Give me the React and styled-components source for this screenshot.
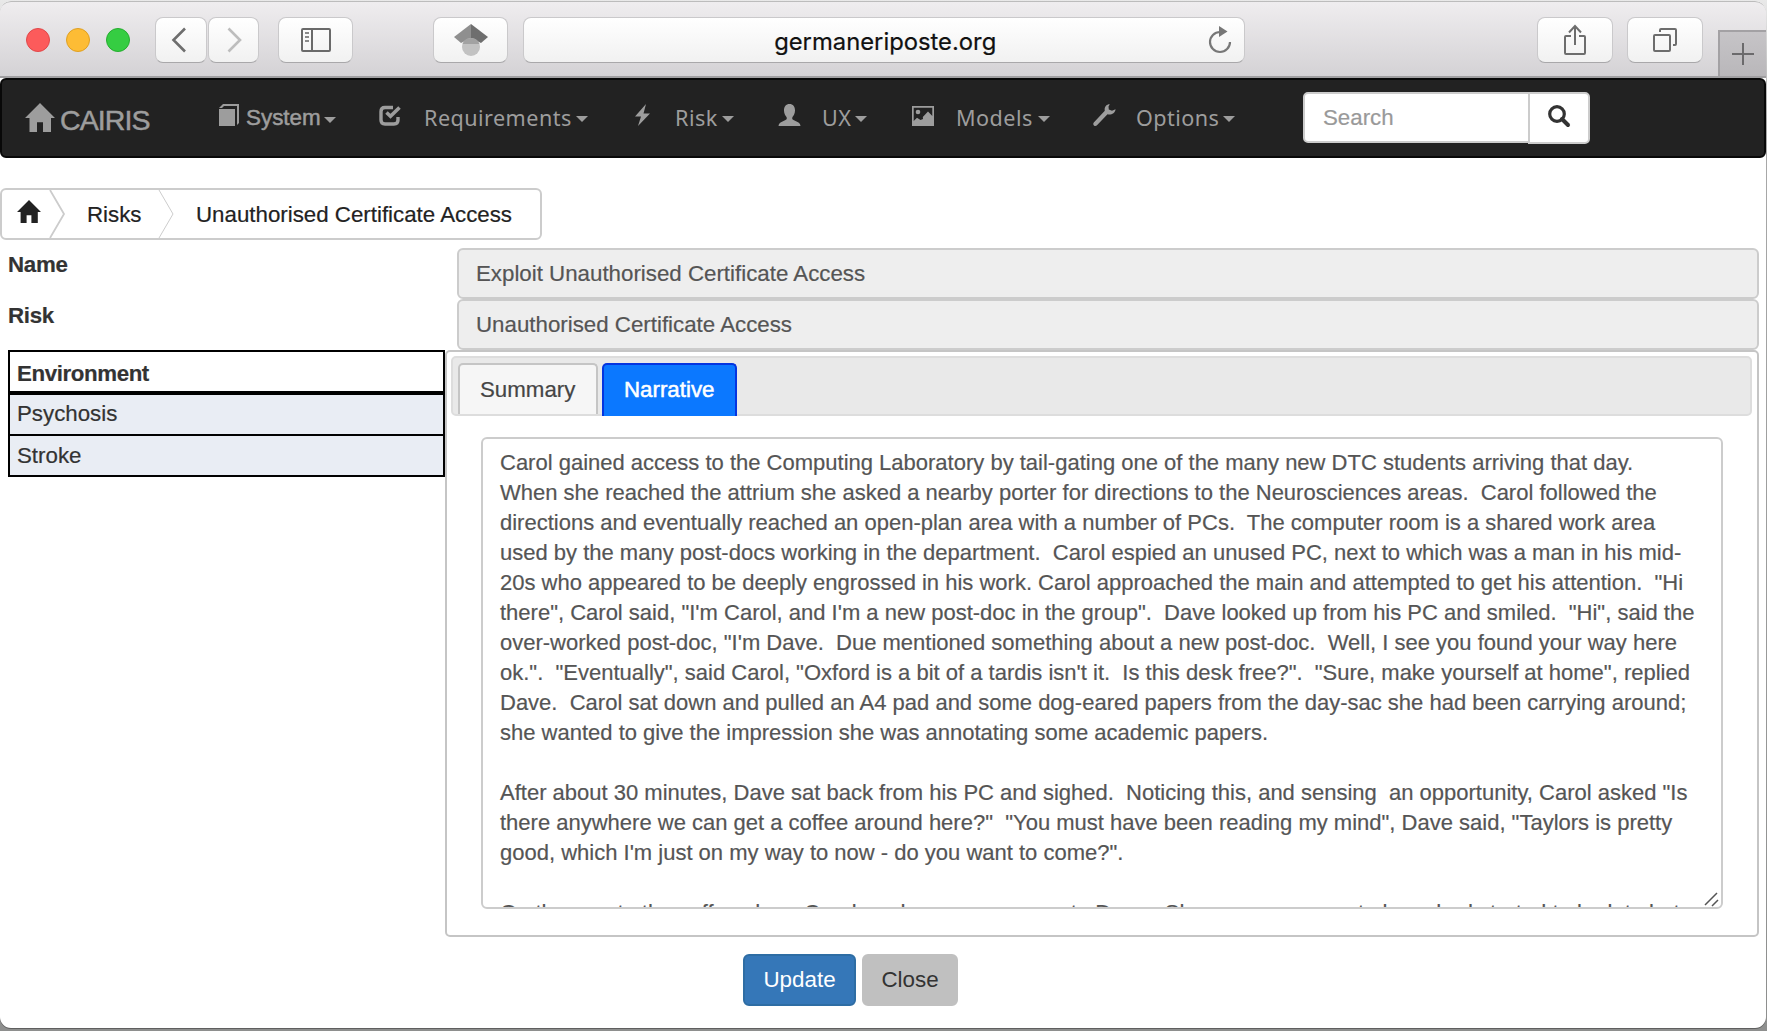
import React from "react";
import styled, { createGlobalStyle } from "styled-components";

const Global = createGlobalStyle`
  * { box-sizing: border-box; }
  html, body { margin: 0; padding: 0; }
  body { overflow: hidden; }
`;

const Frame = styled.div`
  width: 1767px;
  height: 1031px;
  padding: 1px 1px 3px 0;
  background: linear-gradient(#e9e9e9 0, #a9a9a9 120px, #8e8f8e 1000px);
  font-family: "Liberation Sans", Arial, sans-serif;
  font-size: 22.3px;
  line-height: 30px;
  color: #333;
  -webkit-text-stroke: 0.2px;
`;

const BrowserWindow = styled.div`
  display: flex;
  flex-direction: column;
  height: 1027px;
  background: #fff;
  border-radius: 11px;
  overflow: hidden;
  box-shadow: 0 1px 0 #5f5f5f;
`;

const TitleBar = styled.header`
  flex: none;
  display: flex;
  align-items: flex-start;
  height: 77px;
  padding: 15px 0 0 26px;
  border-top: 1px solid #bcbcbc;
  border-bottom: 2px solid #a09fa1;
  border-radius: 11px 11px 0 0;
  background: linear-gradient(#efedef, #d4d2d5);
`;

const Lights = styled.div`
  display: flex;
  gap: 16px;
  padding-top: 11px;
  margin-right: 14px;
  width: 116px;
`;

const Light = styled.span`
  flex: none;
  width: 24px;
  height: 24px;
  border-radius: 50%;
  background: ${(p) => p.$fill};
  border: 1px solid ${(p) => p.$edge};
`;

const ChromeButton = styled.div`
  flex: none;
  display: flex;
  align-items: center;
  justify-content: center;
  width: ${(p) => p.$w}px;
  height: 46px;
  margin-left: ${(p) => p.$gap || 0}px;
  border: 1px solid #cac9cb;
  border-bottom-color: #a9a8aa;
  border-radius: 8px;
  background: linear-gradient(#fff, #f1f1f1);
`;

const AddressBar = styled(ChromeButton)`
  justify-content: flex-end;
  gap: 212px;
  padding-right: 12px;
  font-family: Inter, Roboto, sans-serif;
  font-size: 23.8px;
  color: #111;
  span { padding-top: 3px; }
`;

const NewTab = styled.div`
  display: flex;
  align-items: center;
  justify-content: center;
  width: 48px;
  height: 46px;
  margin: 13px 0 0 15px;
  border: 2px solid #a3a1a4;
  border-width: 2px 0 0 2px;
  background: linear-gradient(#c6c4c7, #b9b7ba);
`;

const NavBar = styled.nav`
  flex: none;
  display: flex;
  align-items: flex-start;
  height: 80px;
  border: 2px solid #080808;
  border-radius: 6px;
  background: #222;
  color: #9d9d9d;
  padding-left: 23px;
`;

const Brand = styled.div`
  display: flex;
  gap: 5px;
  width: 194px;
  padding-top: 23px;
  font-size: 28.5px;
  letter-spacing: -0.9px;
  line-height: 34px;
  -webkit-text-stroke: 0.5px;
`;

const MenuItem = styled.div`
  display: flex;
  width: ${(p) => p.$w}px;
  height: 30px;
  margin-top: 23px;
  font-family: ${(p) => (p.$plain ? "inherit" : '"Noto Sans", "Open Sans", sans-serif')};
  font-size: ${(p) => (p.$plain ? 22.4 : 21.6)}px;
  letter-spacing: ${(p) => (p.$plain ? 0 : 0.45)}px;
  line-height: 30px;
  -webkit-text-stroke: ${(p) => (p.$plain ? 0.5 : 0)}px;
  svg { flex: none; margin-right: ${(p) => p.$gap}px; }
`;

const Caret = styled.i`
  width: 0;
  height: 0;
  margin: ${(p) => (p.$low ? 14 : 13)}px 0 0 ${(p) => p.$gap}px;
  border: 6px solid transparent;
  border-top-color: currentColor;
  border-bottom: 0;
`;

const SearchGroup = styled.div`
  display: flex;
  margin-top: 12px;
`;

const SearchBox = styled.div`
  width: 227px;
  height: 51px;
  padding: 9px 0 0 18px;
  border: 2px solid #ccc;
  border-radius: 5px 0 0 5px;
  background: #fff;
  color: #999;
`;

const SearchButton = styled.div`
  width: 62px;
  height: 52px;
  margin-left: -2px;
  padding: 11px 0 0 18px;
  border: 2px solid #ccc;
  border-radius: 0 5px 5px 0;
  background: #fff;
`;

const Crumbs = styled.div`
  flex: none;
  display: flex;
  width: 542px;
  height: 52px;
  margin-top: 30px;
  border: 2px solid #ccc;
  border-radius: 6px;
  padding-left: 15px;
`;

const Crumb = styled.span`
  width: ${(p) => p.$w}px;
  flex: none;
  padding-top: 10px;
  color: #222;
  svg { display: block; }
`;

const CrumbArrow = styled.svg`
  flex: none;
  margin-right: ${(p) => p.$gap}px;
`;

const Body = styled.main`
  display: grid;
  grid-template-columns: 437px 1314px;
  grid-template-rows: 51px 51px 587px;
  margin-top: 8px;
  padding-left: 8px;
`;

const Label = styled.label`
  padding-top: 2px;
  font-weight: bold;
  letter-spacing: -0.3px;
`;

const Field = styled.div`
  height: 51px;
  margin-left: 12px;
  padding: 9px 17px;
  border: 2px solid #ccc;
  border-radius: 6px;
  background: #eee;
  color: #555;
`;

const EnvTable = styled.div`
  align-self: start;
  border: 2px solid #000;
  height: 127px;
`;

const EnvHead = styled.div`
  height: 43px;
  padding: 7px 7px 0;
  border-bottom: 4px solid #000;
  font-weight: bold;
  letter-spacing: -0.4px;
`;

const EnvRow = styled.div`
  height: ${(p) => (p.$last ? 39 : 41)}px;
  padding: ${(p) => (p.$last ? 5 : 4)}px 7px 0;
  border-bottom: ${(p) => (p.$last ? 0 : 2)}px solid #000;
  background: #e9edf4;
`;

const Panel = styled.section`
  border: 2px solid #c5c5c5;
  border-radius: 5px;
  padding: 4px 5px 0 4px;
`;

const TabStrip = styled.div`
  display: flex;
  gap: 4px;
  height: 60px;
  padding: 5px 5px 0;
  border: 2px solid #ddd;
  border-radius: 5px;
  background: #e9e9e9;
`;

const Tab = styled.div`
  width: ${(p) => p.$w}px;
  height: ${(p) => (p.$active ? 53 : 51)}px;
  padding: 10px 0 0 20px;
  border: 2px solid ${(p) => (p.$active ? "#0435e0" : "#c5c5c5")};
  border-bottom: 0;
  border-radius: 5px 5px 0 0;
  background: ${(p) => (p.$active ? "#0b78ff" : "#f6f6f6")};
  color: ${(p) => (p.$active ? "#fff" : "#454545")};
  -webkit-text-stroke: ${(p) => (p.$active ? 0.5 : 0.2)}px;
`;

const Story = styled.div`
  position: relative;
  width: 1242px;
  height: 472px;
  margin: 21px 0 0 30px;
  padding: 9px 0 0 17px;
  border: 2px solid #ccc;
  border-radius: 6px;
  overflow: hidden;
  font-size: 22px;
  color: #555;
`;

const Line = styled.div`
  height: 30px;
  white-space: pre;
`;

const Grip = styled.svg`
  position: absolute;
  right: 1px;
  bottom: 0;
`;

const Actions = styled.div`
  display: flex;
  gap: 6px;
  margin: 17px 0 0 743px;
`;

const Action = styled.button`
  width: ${(p) => p.$w}px;
  height: 52px;
  padding: 0;
  border: 2px solid ${(p) => (p.$primary ? "#2e6da4" : "#c0c0c0")};
  border-radius: 6px;
  background: ${(p) => (p.$primary ? "#3577b8" : "#c0c0c0")};
  color: ${(p) => (p.$primary ? "#fff" : "#333")};
  font: inherit;
  font-size: 22.4px;
  -webkit-text-stroke: 0;
`;

const HomeIcon = ({ w, h }) => (
  <svg width={w} height={h} viewBox="0 0 30 30" preserveAspectRatio="none" fill="currentColor">
    <path d="M15 0 30 15.5H26V30H18V20H12V30H4.500V15.500H0Z" />
  </svg>
);

const icons = {
  book: (
    <svg width="21" height="30" viewBox="0 0 21 30" fill="currentColor">
      <path d="M0 6H16V23H0ZM0 5 4 1H20V20L18 22V3H5L3 5Z" />
    </svg>
  ),
  check: (
    <svg width="23" height="30" viewBox="0 0 23 30" fill="none" stroke="currentColor">
      <path d="M14 4.500H6Q2 4.500 2 8.500V17Q2 21 6 21H15Q19 21 19 17V14" strokeWidth="3.400" />
      <path d="M7.500 9.500 11.500 13.200 20.500 4.500" strokeWidth="3.600" />
    </svg>
  ),
  bolt: (
    <svg width="15" height="30" viewBox="0 0 15 30" fill="currentColor">
      <path d="M11 1 0 13.500H6L3 23 15 10.500H8.500Z" />
    </svg>
  ),
  user: (
    <svg width="23" height="30" viewBox="0 0 23 30" fill="currentColor">
      <path d="M11.500 1C15 1 17 3.500 17 7.500C17 10.500 15.800 12.500 14.500 14C13.900 15.500 14.200 16.500 15.500 17L20.500 19.500Q22.500 20.500 22.500 23H.5Q.5 20.500 2.500 19.500L7.500 17C8.800 16.500 9.100 15.500 8.500 14C7.200 12.500 6 10.500 6 7.500C6 3.500 8 1 11.500 1Z" />
    </svg>
  ),
  picture: (
    <svg width="22" height="30" viewBox="0 0 22 30" fill="currentColor">
      <path fillRule="evenodd" d="M0 3H22V23H0ZM1.700 4.700V18L5 14.700 8.500 17 11 16 10.800 14 16 8.500 20.300 13V4.700Z" />
      <circle cx="6" cy="9" r="2.300" />
    </svg>
  ),
  wrench: (
    <svg width="23" height="30" viewBox="0 0 23 30" fill="currentColor">
      <path d="M16.800 1.200C13.500 1 11 4 11.800 7.800L.8 19.500C-.2 20.700 .3 22 1.200 22.700C2.200 23.500 3.300 23 4 22.300L14.500 11.300C18 12.300 22 10.500 22.600 6.200L19 7.800L15.800 6.500L15.500 3.500Z" />
    </svg>
  ),
};

const menus = [
  { name: "System", icon: "book", w: 160, gap: 6, caret: 3, plain: true },
  { name: "Requirements", icon: "check", w: 256, gap: 22, caret: 4 },
  { name: "Risk", icon: "bolt", w: 143, gap: 25, caret: 4 },
  { name: "UX", icon: "user", w: 134, gap: 21, caret: 4 },
  { name: "Models", icon: "picture", w: 181, gap: 22, caret: 5 },
  { name: "Options", icon: "wrench", w: 210, gap: 20, caret: 4 },
];

const story = [
  "Carol gained access to the Computing Laboratory by tail-gating one of the many new DTC students arriving that day.",
  "When she reached the attrium she asked a nearby porter for directions to the Neurosciences areas.  Carol followed the",
  "directions and eventually reached an open-plan area with a number of PCs.  The computer room is a shared work area",
  "used by the many post-docs working in the department.  Carol espied an unused PC, next to which was a man in his mid-",
  "20s who appeared to be deeply engrossed in his work. Carol approached the main and attempted to get his attention.  \"Hi",
  "there\", Carol said, \"I'm Carol, and I'm a new post-doc in the group\".  Dave looked up from his PC and smiled.  \"Hi\", said the",
  "over-worked post-doc, \"I'm Dave.  Due mentioned something about a new post-doc.  Well, I see you found your way here",
  "ok.\".  \"Eventually\", said Carol, \"Oxford is a bit of a tardis isn't it.  Is this desk free?\".  \"Sure, make yourself at home\", replied",
  "Dave.  Carol sat down and pulled an A4 pad and some dog-eared papers from the day-sac she had been carrying around;",
  "she wanted to give the impression she was annotating some academic papers.",
  "",
  "After about 30 minutes, Dave sat back from his PC and sighed.  Noticing this, and sensing  an opportunity, Carol asked \"Is",
  "there anywhere we can get a coffee around here?\"  \"You must have been reading my mind\", Dave said, \"Taylors is pretty",
  "good, which I'm just on my way to now - do you want to come?\".",
  "",
  "On the way to the coffee shop, Carol made some excuses to Dave.  She was very sorry to have had started to be late but",
];

export default function App() {
  return (
    <Frame>
      <Global />
      <BrowserWindow>
        <TitleBar>
          <Lights>
            <Light $fill="#fc5b5b" $edge="#e0484a" />
            <Light $fill="#fdbc35" $edge="#dfa023" />
            <Light $fill="#35cd42" $edge="#25ad2f" />
          </Lights>
          <ChromeButton $w={52}>
            <svg width="22" height="28" fill="none" stroke="#6e6e6e" strokeWidth="2.600">
              <path d="M15 2.500 3.500 14 15 25.500" />
            </svg>
          </ChromeButton>
          <ChromeButton $w={51} $gap={1}>
            <svg width="18" height="28" fill="none" stroke="#bdbdbd" strokeWidth="2.600">
              <path d="M3.500 2.500 15 14 3.500 25.500" />
            </svg>
          </ChromeButton>
          <ChromeButton $w={75} $gap={19}>
            <svg width="30" height="24" fill="none" stroke="#6a6a6a" strokeWidth="2">
              <rect x="1" y="1" width="28" height="22" rx="1" />
              <path d="M11 1V23" />
              <path d="M4 5H8M4 9H8M4 13H8" stroke="#8a8a8a" />
            </svg>
          </ChromeButton>
          <ChromeButton $w={75} $gap={80}>
            <svg width="34" height="33">
              <path d="M17 0V14L7 19 0 13Z" fill="#8f8f8f" />
              <path d="M17 0 34 13 27 19 17 14Z" fill="#6e6e6e" />
              <circle cx="17" cy="23" r="9" fill="#c2c2c2" />
              <path d="M8.500 20A9 9 0 0 1 25.500 20Z" fill="#a2a2a2" />
            </svg>
          </ChromeButton>
          <AddressBar $w={722} $gap={15}>
            <span>germaneriposte.org</span>
            <svg width="24" height="30" viewBox="0 0 24 30">
              <path d="M22 17A10 10 0 1 1 12 7" fill="none" stroke="#777" strokeWidth="2.200" />
              <path d="M11 1 19.500 6.500 11 12Z" fill="#777" />
            </svg>
          </AddressBar>
          <ChromeButton $w={76} $gap={292}>
            <svg width="24" height="32" fill="none" stroke="#6d6d6d" strokeWidth="2">
              <path d="M8 12H3Q2 12 2 13V29Q2 30 3 30H21Q22 30 22 29V13Q22 12 21 12H16" />
              <path d="M12 21V2M6 8.500 12 2 18 8.500" />
            </svg>
          </ChromeButton>
          <ChromeButton $w={76} $gap={14}>
            <svg width="24" height="24" fill="none" stroke="#6d6d6d" strokeWidth="2">
              <rect x="1" y="7" width="16" height="16" rx="1" />
              <path d="M7 4V2Q7 1 8 1H22Q23 1 23 2V16Q23 17 22 17H20" />
            </svg>
          </ChromeButton>
          <NewTab>
            <svg width="22" height="22" stroke="#6b6a6c" strokeWidth="2">
              <path d="M11 0V22M0 11H22" />
            </svg>
          </NewTab>
        </TitleBar>
        <NavBar>
          <Brand>
            <HomeIcon w={30} h={29} />
            <span>CAIRIS</span>
          </Brand>
          {menus.map((m) => (
            <MenuItem key={m.name} $w={m.w} $gap={m.gap} $plain={m.plain}>
              {icons[m.icon]}
              {m.name}
              <Caret $gap={m.caret} $low={m.plain} />
            </MenuItem>
          ))}
          <SearchGroup>
            <SearchBox>Search</SearchBox>
            <SearchButton>
              <svg width="23" height="23" fill="none" stroke="#333">
                <circle cx="9" cy="9" r="7.300" strokeWidth="3.200" />
                <path d="M14 14 20 20" strokeWidth="4" strokeLinecap="round" />
              </svg>
            </SearchButton>
          </SearchGroup>
        </NavBar>
        <Crumbs>
          <Crumb $w={32}>
            <HomeIcon w={24} h={23} />
          </Crumb>
          <CrumbArrow $gap={21} width="17" height="48" fill="none" stroke="#ccc" strokeWidth="1.800">
            <path d="M1 0 15 24 1 48" />
          </CrumbArrow>
          <Crumb $w={71}>Risks</Crumb>
          <CrumbArrow $gap={21} width="17" height="48" fill="none" stroke="#ccc" strokeWidth="1">
            <path d="M1 0 15 24 1 48" />
          </CrumbArrow>
          <Crumb $w={320}>Unauthorised Certificate Access</Crumb>
        </Crumbs>
        <Body>
          <Label>Name</Label>
          <Field>Exploit Unauthorised Certificate Access</Field>
          <Label>Risk</Label>
          <Field>Unauthorised Certificate Access</Field>
          <EnvTable>
            <EnvHead>Environment</EnvHead>
            <EnvRow>Psychosis</EnvRow>
            <EnvRow $last>Stroke</EnvRow>
          </EnvTable>
          <Panel>
            <TabStrip>
              <Tab $w={140}>Summary</Tab>
              <Tab $w={135} $active>Narrative</Tab>
            </TabStrip>
            <Story>
              {story.map((text, i) => (
                <Line key={i}>{text}</Line>
              ))}
              <Grip width="16" height="16" stroke="#555" strokeWidth="1.500">
                <path d="M1 14 13 2M8 15 14 9" />
              </Grip>
            </Story>
          </Panel>
        </Body>
        <Actions>
          <Action $w={113} $primary>Update</Action>
          <Action $w={96}>Close</Action>
        </Actions>
      </BrowserWindow>
    </Frame>
  );
}
